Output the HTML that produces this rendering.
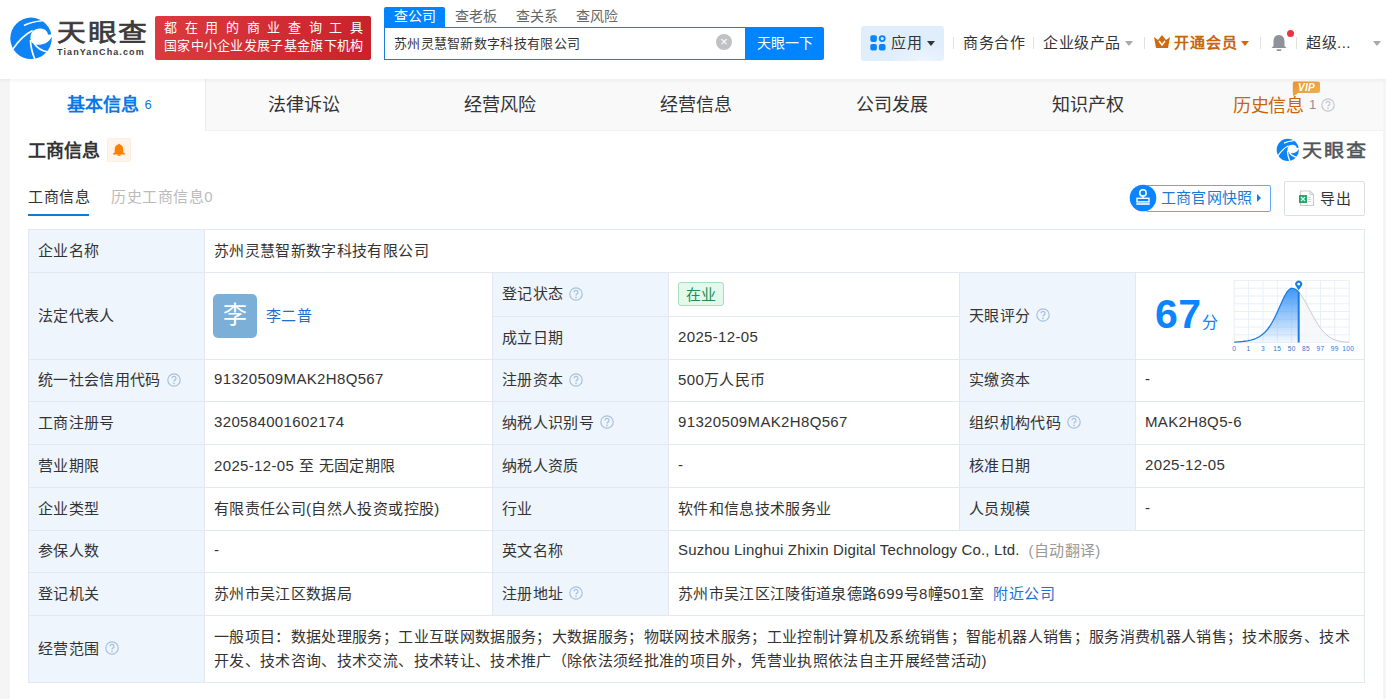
<!DOCTYPE html>
<html lang="zh-CN">
<head>
<meta charset="utf-8">
<style>
*{box-sizing:border-box;margin:0;padding:0}
html,body{width:1386px;height:699px;overflow:hidden;background:#f5f5f5;font-family:"Liberation Sans",sans-serif;color:#333;font-size:15px}
.a{position:absolute;white-space:nowrap}
#hdr{position:absolute;left:0;top:0;width:1386px;height:79px;background:#fff;box-shadow:0 1px 4px rgba(0,0,0,.07);z-index:2}
#card{position:absolute;left:10px;top:79px;width:1373px;height:640px;background:#fff}
#tabs{position:absolute;left:0;top:0;width:1373px;height:52px;background:#f9f9f9;border-bottom:1px solid #f2f2f2}
.tab{position:absolute;top:0;width:196px;height:52px;text-align:center;font-size:18px;line-height:52px;color:#333}
.tab.on{background:#fff;color:#0c78e4;font-weight:bold;border-right:1px solid #ececec;padding-left:4px}
.sep{position:absolute;width:1px;height:12px;background:#e0e0e0;top:37px}
.caret{position:absolute;width:0;height:0;border-left:4px solid transparent;border-right:4px solid transparent;border-top:5px solid #333}
.c{position:absolute;border-right:1px solid #e2e8ee;border-bottom:1px solid #e2e8ee;font-size:15px;padding-left:9px;padding-bottom:4px;letter-spacing:.35px;display:flex;align-items:center;white-space:nowrap}
.l{background:#eef5fd}
.q{display:inline-block;width:14px;height:14px;margin-left:6px;position:relative;top:1px}
.av{display:inline-block;width:44px;height:44px;border-radius:5px;background:#7bafd8;color:#fff;font-size:24px;line-height:42px;text-align:center;position:relative;left:-1px;top:2px}
.lk{color:#1f70cc}
.tag{display:inline-block;height:24px;padding:1px 7px 0;border:1px solid #a9dbbd;background:#e2f9ec;color:#238c4e;font-size:15px;line-height:21px;border-radius:3px;position:relative;top:1px;letter-spacing:0}
.scope{white-space:normal;line-height:24px;padding-right:8px;position:relative;top:2px}
</style>
</head>
<body>
<div id="hdr">
  <!-- logo -->
  <svg class="a" style="left:9px;top:16px" width="45" height="45" viewBox="0 0 699 699">
<circle cx="342" cy="347" r="322" fill="#0d83f5"/>
<path d="M606 292 C600 232 556 193 478 193 C392 193 336 250 333 332 C331 402 378 447 450 447 C542 447 622 410 664 322 L740 330 L740 270 Z" fill="#fff"/>
<g fill="none" stroke="#fff" stroke-width="26" stroke-linecap="butt">
<path d="M60 515 C140 395 245 285 368 226"/>
<path d="M232 148 C320 104 420 82 520 74"/>
<path d="M333 375 C336 480 362 580 405 680"/>
<path d="M392 428 C440 502 520 548 610 562"/>
</g>
  </svg>
  <div class="a" style="left:57px;top:18px;font-size:24px;font-weight:normal;-webkit-text-stroke:.7px #3d3a39;color:#3d3a39;line-height:30px;letter-spacing:1.5px;transform:scaleX(1.2);transform-origin:0 0">天眼查</div>
  <div class="a" style="left:57px;top:46px;font-size:9px;font-weight:bold;color:#3d3a39;letter-spacing:1.1px;line-height:12px">TianYanCha.com</div>
  <div class="a" style="left:155px;top:16px;width:216px;height:44px;border-radius:2px;background:linear-gradient(90deg,#dc3a40,#c9222b)"></div>
  <div class="a" style="left:164px;top:19px;width:199px;font-size:13px;line-height:17px;color:#fff;text-align:justify;text-align-last:justify">都 在 用 的 商 业 查 询 工 具</div>
  <div class="a" style="left:164px;top:37px;width:205px;font-size:13px;line-height:17px;color:#fff;letter-spacing:.3px">国家中小企业发展子基金旗下机构</div>

  <!-- search -->
  <div class="a" style="left:384px;top:7px;width:61px;height:21px;background:#0084ff;border-radius:2px 2px 0 0;color:#fff;font-size:14px;line-height:19px;text-align:center">查公司</div>
  <div class="a" style="left:455px;top:7px;font-size:14px;line-height:19px;color:#666">查老板</div>
  <div class="a" style="left:516px;top:7px;font-size:14px;line-height:19px;color:#666">查关系</div>
  <div class="a" style="left:576px;top:7px;font-size:14px;line-height:19px;color:#666">查风险</div>
  <div class="a" style="left:384px;top:27px;width:362px;height:33px;border:1px solid #1b7fd6;border-right:none;background:#fff"></div>
  <div class="a" style="left:394px;top:35px;font-size:13px;line-height:17px;color:#333;letter-spacing:.3px">苏州灵慧智新数字科技有限公司</div>
  <div class="a" style="left:716px;top:34px;width:16px;height:16px;border-radius:50%;background:#c0c1c5;color:#fff;font-size:13px;line-height:16px;text-align:center">×</div>
  <div class="a" style="left:745px;top:27px;width:79px;height:33px;background:#0084ff;border-radius:0 2px 2px 0;color:#fff;font-size:14px;line-height:33px;text-align:center">天眼一下</div>

  <!-- right nav -->
  <div class="a" style="left:861px;top:26px;width:83px;height:35px;border-radius:3px;background:radial-gradient(ellipse 40px 20px at 75% 100%,#eef5fd,#e0eefc 80%)"></div>
  <svg class="a" style="left:870px;top:35px" width="16" height="16" viewBox="0 0 16 16">
    <rect x="0.3" y="0.3" width="6.6" height="6.6" rx="1.8" fill="#0a84ff"/>
    <circle cx="12.2" cy="3.6" r="2.5" fill="none" stroke="#0a84ff" stroke-width="1.9"/>
    <rect x="0.3" y="8.9" width="6.6" height="6.6" rx="1.8" fill="#0a84ff"/>
    <rect x="8.9" y="8.9" width="6.6" height="6.6" rx="1.8" fill="#0a84ff"/>
  </svg>
  <div class="a" style="left:891px;top:33px;font-size:15px;line-height:19px;color:#333;letter-spacing:.5px">应用</div>
  <div class="caret" style="left:927px;top:41px"></div>
  <div class="sep" style="left:953px"></div>
  <div class="a" style="left:963px;top:33px;font-size:15px;line-height:19px;color:#333;letter-spacing:.5px">商务合作</div>
  <div class="sep" style="left:1033px"></div>
  <div class="a" style="left:1043px;top:33px;font-size:15px;line-height:19px;color:#333;letter-spacing:.5px">企业级产品</div>
  <div class="caret" style="left:1125px;top:41px;border-top-color:#aaa"></div>
  <div class="sep" style="left:1144px"></div>
  <svg class="a" style="left:1154px;top:35px" width="16" height="13" viewBox="0 0 16 13">
    <path d="M0 2 L4 5 L8 0 L12 5 L16 2 L14 13 L2 13 Z" fill="#d0690e"/>
    <path d="M5 6 L8 10 L11 6" fill="none" stroke="#fff" stroke-width="1.6"/>
  </svg>
  <div class="a" style="left:1174px;top:33px;font-size:15px;line-height:19px;color:#c8650e;font-weight:bold;letter-spacing:1px">开通会员</div>
  <div class="caret" style="left:1241px;top:41px;border-top-color:#d0690e"></div>
  <div class="sep" style="left:1260px"></div>
  <svg class="a" style="left:1271px;top:34px" width="16" height="18" viewBox="0 0 16 18">
    <path d="M8 1 C4 1 2.5 4 2.5 7.5 L2.5 12 L0.5 14 L15.5 14 L13.5 12 L13.5 7.5 C13.5 4 12 1 8 1 Z" fill="#8f9399"/>
    <rect x="5.5" y="15.3" width="5" height="1.6" rx=".8" fill="#8f9399"/>
  </svg>
  <div class="a" style="left:1287px;top:30px;width:7px;height:7px;border-radius:50%;background:#f0323c"></div>
  <div class="sep" style="left:1296px"></div>
  <div class="a" style="left:1306px;top:33px;font-size:15px;line-height:19px;color:#333;letter-spacing:.5px">超级...</div>
  <div class="caret" style="left:1373px;top:41px;border-top-color:#aaa"></div>
</div>

<div id="card">
  <div id="tabs">
    <div class="tab on" style="left:0">基本信息<span style="font-size:13px;font-weight:normal;margin-left:5px;vertical-align:2px">6</span></div>
    <div class="tab" style="left:196px">法律诉讼</div>
    <div class="tab" style="left:392px">经营风险</div>
    <div class="tab" style="left:588px">经营信息</div>
    <div class="tab" style="left:784px">公司发展</div>
    <div class="tab" style="left:980px">知识产权</div>
    <div class="tab" style="left:1176px;color:#c8650e;letter-spacing:-.2px">历史信息<span style="font-size:13px;color:#8c9099;margin-left:5px;vertical-align:3px">1</span><svg width="14" height="14" viewBox="0 0 14 14" style="margin-left:5px;vertical-align:0px"><circle cx="7" cy="7" r="6.2" fill="none" stroke="#c3c7cf" stroke-width="1.2"/><path d="M5 5.4 A2 2 0 1 1 7.9 7.1 C7.2 7.5 7 7.8 7 8.6" fill="none" stroke="#c3c7cf" stroke-width="1.3"/><circle cx="7" cy="10.4" r=".8" fill="#c3c7cf"/></svg></div>
    <svg class="a" style="left:1282px;top:2px" width="29" height="17" viewBox="0 0 29 17">
      <defs><linearGradient id="vg" x1="0" y1="0" x2="1" y2="1"><stop offset="0" stop-color="#e39531"/><stop offset="1" stop-color="#f2b257"/></linearGradient></defs>
      <path d="M2.5 0.5 L26 0.5 Q28 0.5 28 2.5 L28 10 Q28 12 26 12 L6 12 L1.5 15.5 L0.8 12 L0.8 2.5 Q0.8 0.5 2.5 0.5 Z" fill="url(#vg)"/>
      <text x="14.5" y="10" font-family="Liberation Sans" font-weight="bold" font-style="italic" font-size="10" fill="#fff" text-anchor="middle" letter-spacing=".3">VIP</text>
    </svg>
  </div>
</div>
<div class="a" style="left:28px;top:138px;font-size:18px;line-height:26px;font-weight:bold;color:#333">工商信息</div>
<div class="a" style="left:107px;top:138px;width:24px;height:24px;border:1px solid #fdeee0;background:#fff4ea;border-radius:2px"></div>
<svg class="a" style="left:112px;top:143px" width="14" height="14" viewBox="0 0 14 14">
  <path d="M7 0.8 C7.6 0.8 7.9 1.2 7.9 1.6 C10.3 2.1 11.3 4 11.3 6.5 L11.3 9.4 L13 10.5 L13 11.4 L1 11.4 L1 10.5 L2.7 9.4 L2.7 6.5 C2.7 4 3.7 2.1 6.1 1.6 C6.1 1.2 6.4 0.8 7 0.8 Z" fill="#ff8000"/>
  <path d="M5.2 11.3 A1.8 1.8 0 0 0 8.8 11.3 Z" fill="#ff8000"/>
</svg>
<div class="a" style="left:28px;top:187px;font-size:15px;line-height:20px;color:#333;letter-spacing:.7px">工商信息</div>
<div class="a" style="left:28px;top:214px;width:61px;height:2px;background:#0a7bd9"></div>
<div class="a" style="left:111px;top:187px;font-size:15px;line-height:20px;color:#bbb;letter-spacing:.55px">历史工商信息0</div>

<svg class="a" style="left:1276px;top:138px" width="24" height="24" viewBox="0 0 699 699">
<circle cx="342" cy="347" r="322" fill="#0d83f5"/>
<path d="M606 292 C600 232 556 193 478 193 C392 193 336 250 333 332 C331 402 378 447 450 447 C542 447 622 410 664 322 L740 330 L740 270 Z" fill="#fff"/>
<g fill="none" stroke="#fff" stroke-width="38" stroke-linecap="butt">
<path d="M60 515 C140 395 245 285 368 226"/>
<path d="M232 148 C320 104 420 82 520 74"/>
<path d="M333 375 C336 480 362 580 405 680"/>
<path d="M392 428 C440 502 520 548 610 562"/>
</g>
</svg>
<div class="a" style="left:1302px;top:140px;font-size:18px;font-weight:normal;-webkit-text-stroke:.5px #50555b;color:#50555b;line-height:22px;letter-spacing:1.5px;transform:scaleX(1.12);transform-origin:0 0">天眼查</div>

<div class="a" style="left:1146px;top:185px;width:125px;height:27px;border:1px solid #63a8f3;border-radius:2px;background:#fff"></div>
<svg class="a" style="left:1129px;top:184px" width="28" height="28" viewBox="0 0 28 28">
<circle cx="14" cy="14" r="13.3" fill="#0a84ff"/>
<circle cx="14" cy="8.9" r="3.2" fill="none" stroke="#fff" stroke-width="1.5"/>
<path d="M14 12 L14 14" stroke="#fff" stroke-width="1.5"/>
<rect x="8" y="14.3" width="12" height="3.6" fill="none" stroke="#fff" stroke-width="1.4"/>
<rect x="7.3" y="19" width="13.4" height="2" fill="#cfe6ff"/>
</svg>
<div class="a" style="left:1161px;top:188px;font-size:15px;line-height:20px;color:#1a7ad8;letter-spacing:.2px">工商官网快照</div>
<div class="a" style="left:1257px;top:194px;width:0;height:0;border-top:4px solid transparent;border-bottom:4px solid transparent;border-left:4px solid #1a7ad8"></div>

<div class="a" style="left:1284px;top:181px;width:81px;height:35px;border:1px solid #dcdfe6;border-radius:2px;background:#fff"></div>
<svg class="a" style="left:1298px;top:190px" width="17" height="17" viewBox="0 0 17 17">
  <path d="M2.5 1 L12 1 L15.5 4.5 L15.5 15.5 L2.5 15.5 Z" fill="#fff" stroke="#cbcbcb" stroke-width="1.1"/>
  <path d="M12 1 L12 4.5 L15.5 4.5" fill="none" stroke="#cbcbcb" stroke-width="1"/>
  <rect x="1" y="5" width="8" height="8" rx=".6" fill="#23a566"/>
  <path d="M3 7 L7 11 M7 7 L3 11" stroke="#dff" stroke-width="1.2"/>
  <path d="M10.3 7.5 L13 7.5 M10.3 9.5 L13 9.5 M10.3 11.5 L13 11.5" stroke="#c8c8c8" stroke-width=".9"/>
</svg>
<div class="a" style="left:1320px;top:189px;font-size:15px;line-height:20px;color:#333;letter-spacing:.5px">导出</div>

<div class="a" style="left:28px;top:229px;width:1337px;height:454px;border-top:1px solid #e2e8ee;border-left:1px solid #e2e8ee"></div>
<div class="c l" style="left:29px;top:230px;width:176px;height:43px;">企业名称</div>
<div class="c" style="left:205px;top:230px;width:1160px;height:43px;">苏州灵慧智新数字科技有限公司</div>
<div class="c l" style="left:29px;top:273px;width:176px;height:87px;">法定代表人</div>
<div class="c" style="left:205px;top:273px;width:288px;height:87px;"><span class="av">李</span><span class="lk" style="margin-left:8px">李二普</span></div>
<div class="c l" style="left:493px;top:273px;width:176px;height:44px;">登记状态<svg class="q" width="14" height="14" viewBox="0 0 14 14"><circle cx="7" cy="7" r="6.2" fill="none" stroke="#a9c1d9" stroke-width="1.2"/><path d="M5 5.4 A2 2 0 1 1 7.9 7.1 C7.2 7.5 7 7.8 7 8.6" fill="none" stroke="#a9c1d9" stroke-width="1.3"/><circle cx="7" cy="10.4" r=".8" fill="#a9c1d9"/></svg></div>
<div class="c" style="left:669px;top:273px;width:291px;height:44px;"><span class="tag">在业</span></div>
<div class="c l" style="left:493px;top:317px;width:176px;height:43px;">成立日期</div>
<div class="c" style="left:669px;top:317px;width:291px;height:43px;">2025-12-05</div>
<div class="c l" style="left:960px;top:273px;width:176px;height:87px;">天眼评分<svg class="q" width="14" height="14" viewBox="0 0 14 14"><circle cx="7" cy="7" r="6.2" fill="none" stroke="#a9c1d9" stroke-width="1.2"/><path d="M5 5.4 A2 2 0 1 1 7.9 7.1 C7.2 7.5 7 7.8 7 8.6" fill="none" stroke="#a9c1d9" stroke-width="1.3"/><circle cx="7" cy="10.4" r=".8" fill="#a9c1d9"/></svg></div>
<div class="c" style="left:1136px;top:273px;width:229px;height:87px;"><div class="a" style="left:19px;top:21px;font-size:41px;line-height:40px;font-weight:bold;color:#0a84ff">67</div>
<div class="a" style="left:66px;top:40px;font-size:16px;line-height:20px;color:#0a84ff">分</div>
<svg class="a" style="left:90px;top:1px" width="132" height="82" viewBox="0 0 132 82">
<defs><linearGradient id="gf" x1="0" y1="0" x2="0" y2="1"><stop offset="0" stop-color="#3f97f7"/><stop offset="1" stop-color="#3f97f7" stop-opacity=".06"/></linearGradient></defs>
<g stroke="#e8f0f8" stroke-width="1"><line x1="8.2" y1="6.5" x2="8.2" y2="68.5"/><line x1="22.6" y1="6.5" x2="22.6" y2="68.5"/><line x1="37.0" y1="6.5" x2="37.0" y2="68.5"/><line x1="51.3" y1="6.5" x2="51.3" y2="68.5"/><line x1="65.7" y1="6.5" x2="65.7" y2="68.5"/><line x1="80.1" y1="6.5" x2="80.1" y2="68.5"/><line x1="94.5" y1="6.5" x2="94.5" y2="68.5"/><line x1="108.8" y1="6.5" x2="108.8" y2="68.5"/><line x1="123.2" y1="6.5" x2="123.2" y2="68.5"/><line x1="8.2" y1="6.5" x2="123.2" y2="6.5"/><line x1="8.2" y1="14.2" x2="123.2" y2="14.2"/><line x1="8.2" y1="22.0" x2="123.2" y2="22.0"/><line x1="8.2" y1="29.8" x2="123.2" y2="29.8"/><line x1="8.2" y1="37.5" x2="123.2" y2="37.5"/><line x1="8.2" y1="45.2" x2="123.2" y2="45.2"/><line x1="8.2" y1="53.0" x2="123.2" y2="53.0"/><line x1="8.2" y1="60.8" x2="123.2" y2="60.8"/><line x1="8.2" y1="68.5" x2="123.2" y2="68.5"/></g>
<path d="M72.70 18.13 L73.71 19.31 L74.72 20.63 L75.73 22.06 L76.74 23.60 L77.75 25.24 L78.76 26.95 L79.77 28.73 L80.78 30.56 L81.79 32.42 L82.80 34.31 L83.81 36.21 L84.82 38.10 L85.83 39.98 L86.84 41.83 L87.85 43.64 L88.86 45.41 L89.87 47.12 L90.88 48.77 L91.89 50.36 L92.90 51.87 L93.91 53.31 L94.92 54.67 L95.93 55.94 L96.94 57.14 L97.95 58.26 L98.96 59.30 L99.97 60.26 L100.98 61.15 L101.99 61.96 L103.00 62.70 L104.01 63.38 L105.02 63.99 L106.03 64.54 L107.04 65.03 L108.05 65.48 L109.06 65.87 L110.07 66.23 L111.08 66.54 L112.09 66.81 L113.10 67.05 L114.11 67.26 L115.12 67.45 L116.13 67.60 L117.14 67.74 L118.15 67.86 L119.16 67.96 L120.17 68.05 L121.18 68.12 L122.19 68.19 L123.20 68.24 L123.2 68.5 L72.7 68.5 Z" fill="#f5f6f8" fill-opacity=".8"/>
<path d="M72.70 18.13 L73.71 19.31 L74.72 20.63 L75.73 22.06 L76.74 23.60 L77.75 25.24 L78.76 26.95 L79.77 28.73 L80.78 30.56 L81.79 32.42 L82.80 34.31 L83.81 36.21 L84.82 38.10 L85.83 39.98 L86.84 41.83 L87.85 43.64 L88.86 45.41 L89.87 47.12 L90.88 48.77 L91.89 50.36 L92.90 51.87 L93.91 53.31 L94.92 54.67 L95.93 55.94 L96.94 57.14 L97.95 58.26 L98.96 59.30 L99.97 60.26 L100.98 61.15 L101.99 61.96 L103.00 62.70 L104.01 63.38 L105.02 63.99 L106.03 64.54 L107.04 65.03 L108.05 65.48 L109.06 65.87 L110.07 66.23 L111.08 66.54 L112.09 66.81 L113.10 67.05 L114.11 67.26 L115.12 67.45 L116.13 67.60 L117.14 67.74 L118.15 67.86 L119.16 67.96 L120.17 68.05 L121.18 68.12 L122.19 68.19 L123.20 68.24" fill="none" stroke="#c5cad2" stroke-width="1"/>
<path d="M8.20 68.10 L9.49 68.04 L10.78 67.97 L12.07 67.89 L13.36 67.79 L14.65 67.69 L15.94 67.57 L17.23 67.43 L18.52 67.27 L19.81 67.09 L21.10 66.88 L22.39 66.64 L23.68 66.36 L24.97 66.05 L26.26 65.69 L27.55 65.28 L28.84 64.81 L30.13 64.28 L31.42 63.67 L32.71 62.98 L34.00 62.20 L35.29 61.32 L36.58 60.33 L37.87 59.20 L39.16 57.95 L40.45 56.55 L41.74 54.99 L43.03 53.26 L44.32 51.36 L45.61 49.28 L46.90 47.03 L48.19 44.61 L49.48 42.03 L50.77 39.31 L52.06 36.48 L53.35 33.58 L54.64 30.65 L55.93 27.77 L57.22 24.98 L58.51 22.37 L59.80 20.02 L61.09 17.98 L62.38 16.34 L63.67 15.16 L64.96 14.47 L66.25 14.31 L67.54 14.51 L68.83 15.00 L70.12 15.78 L71.41 16.83 L72.70 18.13 L72.7 68.5 L8.2 68.5 Z" fill="url(#gf)"/>
<path d="M8.20 68.10 L9.49 68.04 L10.78 67.97 L12.07 67.89 L13.36 67.79 L14.65 67.69 L15.94 67.57 L17.23 67.43 L18.52 67.27 L19.81 67.09 L21.10 66.88 L22.39 66.64 L23.68 66.36 L24.97 66.05 L26.26 65.69 L27.55 65.28 L28.84 64.81 L30.13 64.28 L31.42 63.67 L32.71 62.98 L34.00 62.20 L35.29 61.32 L36.58 60.33 L37.87 59.20 L39.16 57.95 L40.45 56.55 L41.74 54.99 L43.03 53.26 L44.32 51.36 L45.61 49.28 L46.90 47.03 L48.19 44.61 L49.48 42.03 L50.77 39.31 L52.06 36.48 L53.35 33.58 L54.64 30.65 L55.93 27.77 L57.22 24.98 L58.51 22.37 L59.80 20.02 L61.09 17.98 L62.38 16.34 L63.67 15.16 L64.96 14.47 L66.25 14.31 L67.54 14.51 L68.83 15.00 L70.12 15.78 L71.41 16.83 L72.70 18.13" fill="none" stroke="#1a7de6" stroke-width="1.3"/>
<line x1="72.7" y1="18.1" x2="72.7" y2="68.5" stroke="#1a7de6" stroke-width="2"/>
<path d="M72.7 16.3 L69.8 12.1 A3.5 3.5 0 1 1 75.6 12.1 Z" fill="#1a7de6"/>
<circle cx="72.7" cy="10.1" r="1.4" fill="#fff"/>
<g font-family="Liberation Sans" font-size="6.6" fill="#2c78d0" text-anchor="middle"><text x="8.2" y="76.8">0</text><text x="22.6" y="76.8">1</text><text x="37.0" y="76.8">3</text><text x="51.3" y="76.8">15</text><text x="65.7" y="76.8">50</text><text x="80.1" y="76.8">85</text><text x="94.5" y="76.8">97</text><text x="108.8" y="76.8">99</text><text x="122.2" y="76.8">100</text></g>
</svg></div>
<div class="c l" style="left:29px;top:360px;width:176px;height:42px;">统一社会信用代码<svg class="q" width="14" height="14" viewBox="0 0 14 14"><circle cx="7" cy="7" r="6.2" fill="none" stroke="#a9c1d9" stroke-width="1.2"/><path d="M5 5.4 A2 2 0 1 1 7.9 7.1 C7.2 7.5 7 7.8 7 8.6" fill="none" stroke="#a9c1d9" stroke-width="1.3"/><circle cx="7" cy="10.4" r=".8" fill="#a9c1d9"/></svg></div>
<div class="c" style="left:205px;top:360px;width:288px;height:42px;">91320509MAK2H8Q567</div>
<div class="c l" style="left:493px;top:360px;width:176px;height:42px;">注册资本<svg class="q" width="14" height="14" viewBox="0 0 14 14"><circle cx="7" cy="7" r="6.2" fill="none" stroke="#a9c1d9" stroke-width="1.2"/><path d="M5 5.4 A2 2 0 1 1 7.9 7.1 C7.2 7.5 7 7.8 7 8.6" fill="none" stroke="#a9c1d9" stroke-width="1.3"/><circle cx="7" cy="10.4" r=".8" fill="#a9c1d9"/></svg></div>
<div class="c" style="left:669px;top:360px;width:291px;height:42px;">500万人民币</div>
<div class="c l" style="left:960px;top:360px;width:176px;height:42px;">实缴资本</div>
<div class="c" style="left:1136px;top:360px;width:229px;height:42px;">-</div>
<div class="c l" style="left:29px;top:402px;width:176px;height:43px;">工商注册号</div>
<div class="c" style="left:205px;top:402px;width:288px;height:43px;">320584001602174</div>
<div class="c l" style="left:493px;top:402px;width:176px;height:43px;">纳税人识别号<svg class="q" width="14" height="14" viewBox="0 0 14 14"><circle cx="7" cy="7" r="6.2" fill="none" stroke="#a9c1d9" stroke-width="1.2"/><path d="M5 5.4 A2 2 0 1 1 7.9 7.1 C7.2 7.5 7 7.8 7 8.6" fill="none" stroke="#a9c1d9" stroke-width="1.3"/><circle cx="7" cy="10.4" r=".8" fill="#a9c1d9"/></svg></div>
<div class="c" style="left:669px;top:402px;width:291px;height:43px;">91320509MAK2H8Q567</div>
<div class="c l" style="left:960px;top:402px;width:176px;height:43px;">组织机构代码<svg class="q" width="14" height="14" viewBox="0 0 14 14"><circle cx="7" cy="7" r="6.2" fill="none" stroke="#a9c1d9" stroke-width="1.2"/><path d="M5 5.4 A2 2 0 1 1 7.9 7.1 C7.2 7.5 7 7.8 7 8.6" fill="none" stroke="#a9c1d9" stroke-width="1.3"/><circle cx="7" cy="10.4" r=".8" fill="#a9c1d9"/></svg></div>
<div class="c" style="left:1136px;top:402px;width:229px;height:43px;">MAK2H8Q5-6</div>
<div class="c l" style="left:29px;top:445px;width:176px;height:43px;">营业期限</div>
<div class="c" style="left:205px;top:445px;width:288px;height:43px;">2025-12-05 至 无固定期限</div>
<div class="c l" style="left:493px;top:445px;width:176px;height:43px;">纳税人资质</div>
<div class="c" style="left:669px;top:445px;width:291px;height:43px;">-</div>
<div class="c l" style="left:960px;top:445px;width:176px;height:43px;">核准日期</div>
<div class="c" style="left:1136px;top:445px;width:229px;height:43px;">2025-12-05</div>
<div class="c l" style="left:29px;top:488px;width:176px;height:43px;">企业类型</div>
<div class="c" style="left:205px;top:488px;width:288px;height:43px;">有限责任公司(自然人投资或控股)</div>
<div class="c l" style="left:493px;top:488px;width:176px;height:43px;">行业</div>
<div class="c" style="left:669px;top:488px;width:291px;height:43px;">软件和信息技术服务业</div>
<div class="c l" style="left:960px;top:488px;width:176px;height:43px;">人员规模</div>
<div class="c" style="left:1136px;top:488px;width:229px;height:43px;">-</div>
<div class="c l" style="left:29px;top:531px;width:176px;height:42px;">参保人数</div>
<div class="c" style="left:205px;top:531px;width:288px;height:42px;">-</div>
<div class="c l" style="left:493px;top:531px;width:176px;height:42px;">英文名称</div>
<div class="c" style="left:669px;top:531px;width:696px;height:42px;"><span style="letter-spacing:.15px">Suzhou Linghui Zhixin Digital Technology Co., Ltd.</span><span style="color:#999;margin-left:9px">(自动翻译)</span></div>
<div class="c l" style="left:29px;top:573px;width:176px;height:43px;">登记机关</div>
<div class="c" style="left:205px;top:573px;width:288px;height:43px;">苏州市吴江区数据局</div>
<div class="c l" style="left:493px;top:573px;width:176px;height:43px;">注册地址<svg class="q" width="14" height="14" viewBox="0 0 14 14"><circle cx="7" cy="7" r="6.2" fill="none" stroke="#a9c1d9" stroke-width="1.2"/><path d="M5 5.4 A2 2 0 1 1 7.9 7.1 C7.2 7.5 7 7.8 7 8.6" fill="none" stroke="#a9c1d9" stroke-width="1.3"/><circle cx="7" cy="10.4" r=".8" fill="#a9c1d9"/></svg></div>
<div class="c" style="left:669px;top:573px;width:696px;height:43px;">苏州市吴江区江陵街道泉德路699号8幢501室<span class="lk" style="margin-left:9px">附近公司</span></div>
<div class="c l" style="left:29px;top:616px;width:176px;height:67px;">经营范围<svg class="q" width="14" height="14" viewBox="0 0 14 14"><circle cx="7" cy="7" r="6.2" fill="none" stroke="#a9c1d9" stroke-width="1.2"/><path d="M5 5.4 A2 2 0 1 1 7.9 7.1 C7.2 7.5 7 7.8 7 8.6" fill="none" stroke="#a9c1d9" stroke-width="1.3"/><circle cx="7" cy="10.4" r=".8" fill="#a9c1d9"/></svg></div>
<div class="c" style="left:205px;top:616px;width:1160px;height:67px;"><div class="scope">一般项目：数据处理服务；工业互联网数据服务；大数据服务；物联网技术服务；工业控制计算机及系统销售；智能机器人销售；服务消费机器人销售；技术服务、技术开发、技术咨询、技术交流、技术转让、技术推广（除依法须经批准的项目外，凭营业执照依法自主开展经营活动)</div></div>
</body>
</html>
